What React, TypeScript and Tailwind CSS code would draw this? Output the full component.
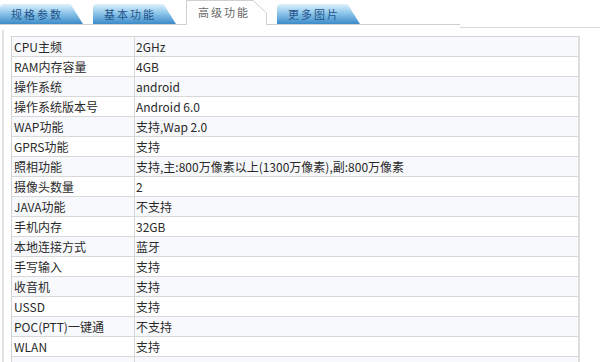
import React from 'react';

const rows: [string, string][] = [
  ['CPU主频', '2GHz'],
  ['RAM内存容量', '4GB'],
  ['操作系统', 'android'],
  ['操作系统版本号', 'Android 6.0'],
  ['WAP功能', '支持,Wap 2.0'],
  ['GPRS功能', '支持'],
  ['照相功能', '支持,主:800万像素以上(1300万像素),副:800万像素'],
  ['摄像头数量', '2'],
  ['JAVA功能', '不支持'],
  ['手机内存', '32GB'],
  ['本地连接方式', '蓝牙'],
  ['手写输入', '支持'],
  ['收音机', '支持'],
  ['USSD', '支持'],
  ['POC(PTT)一键通', '不支持'],
  ['WLAN', '支持'],
  ['', ''],
];

const BlueTab = ({ label }: { label: string }) => (
  <div className="w-[83px] h-[20px] rounded-tl-[4px] bg-gradient-to-b from-[#dff1fb] via-[#86c1e7] to-[#3b8bc9] [clip-path:polygon(0_0,85%_0,100%_100%,0_100%)] flex items-center pl-[11px] text-[11px] tracking-[2px] text-[#24548a] leading-none">
    {label}
  </div>
);

const ActiveTab = ({ label }: { label: string }) => (
  <div className="relative w-[81px] h-[25px] -mb-px bg-white flex items-center pl-[12px] text-[11px] tracking-[2px] text-[#666] leading-none">
    <svg className="absolute inset-0" width="81" height="25" viewBox="0 0 81 25">
      <path d="M0.5 25 V0.5 H67 L80.5 13 V25" fill="none" stroke="#cfcfcf" strokeWidth="1" />
    </svg>
    <span className="relative">{label}</span>
  </div>
);

export default function App() {
  return (
    <div className="w-[600px] h-[362px] bg-white overflow-hidden font-['Noto_Sans_CJK_SC',sans-serif]">
      <div className="flex items-start">
        <div className="w-[460px] h-[25px] border-b border-[#cfcfcf] flex items-end gap-[10px]">
          <BlueTab label="规格参数" />
          <BlueTab label="基本功能" />
          <ActiveTab label="高级功能" />
          <BlueTab label="更多图片" />
        </div>
        <div className="flex-1 h-[28px] border-b border-[#dadada]" />
      </div>

      <div className="ml-[2px] mt-[2px] border-l-2 border-[#e3e3e3] pl-[7px] pt-[6px] h-[400px]">
        <div className="w-[569px] border-t border-l border-[#d4d4d4] border-r-2 border-r-[#dedede]">
          {rows.map(([name, value], i) => (
            <div
              key={i}
              className={`flex h-[20px] border-b border-[#d8d8d8] text-[12px] leading-none text-[#2a2a2a] ${
                i % 2 === 0 ? 'bg-[#f8f9fc]' : 'bg-white'
              }`}
            >
              <div className="w-[123px] border-r border-[#d8d8d8] flex items-center pl-[2px]">{name}</div>
              <div className="flex-1 flex items-center pl-[1px]">{value}</div>
            </div>
          ))}
        </div>
      </div>
    </div>
  );
}
